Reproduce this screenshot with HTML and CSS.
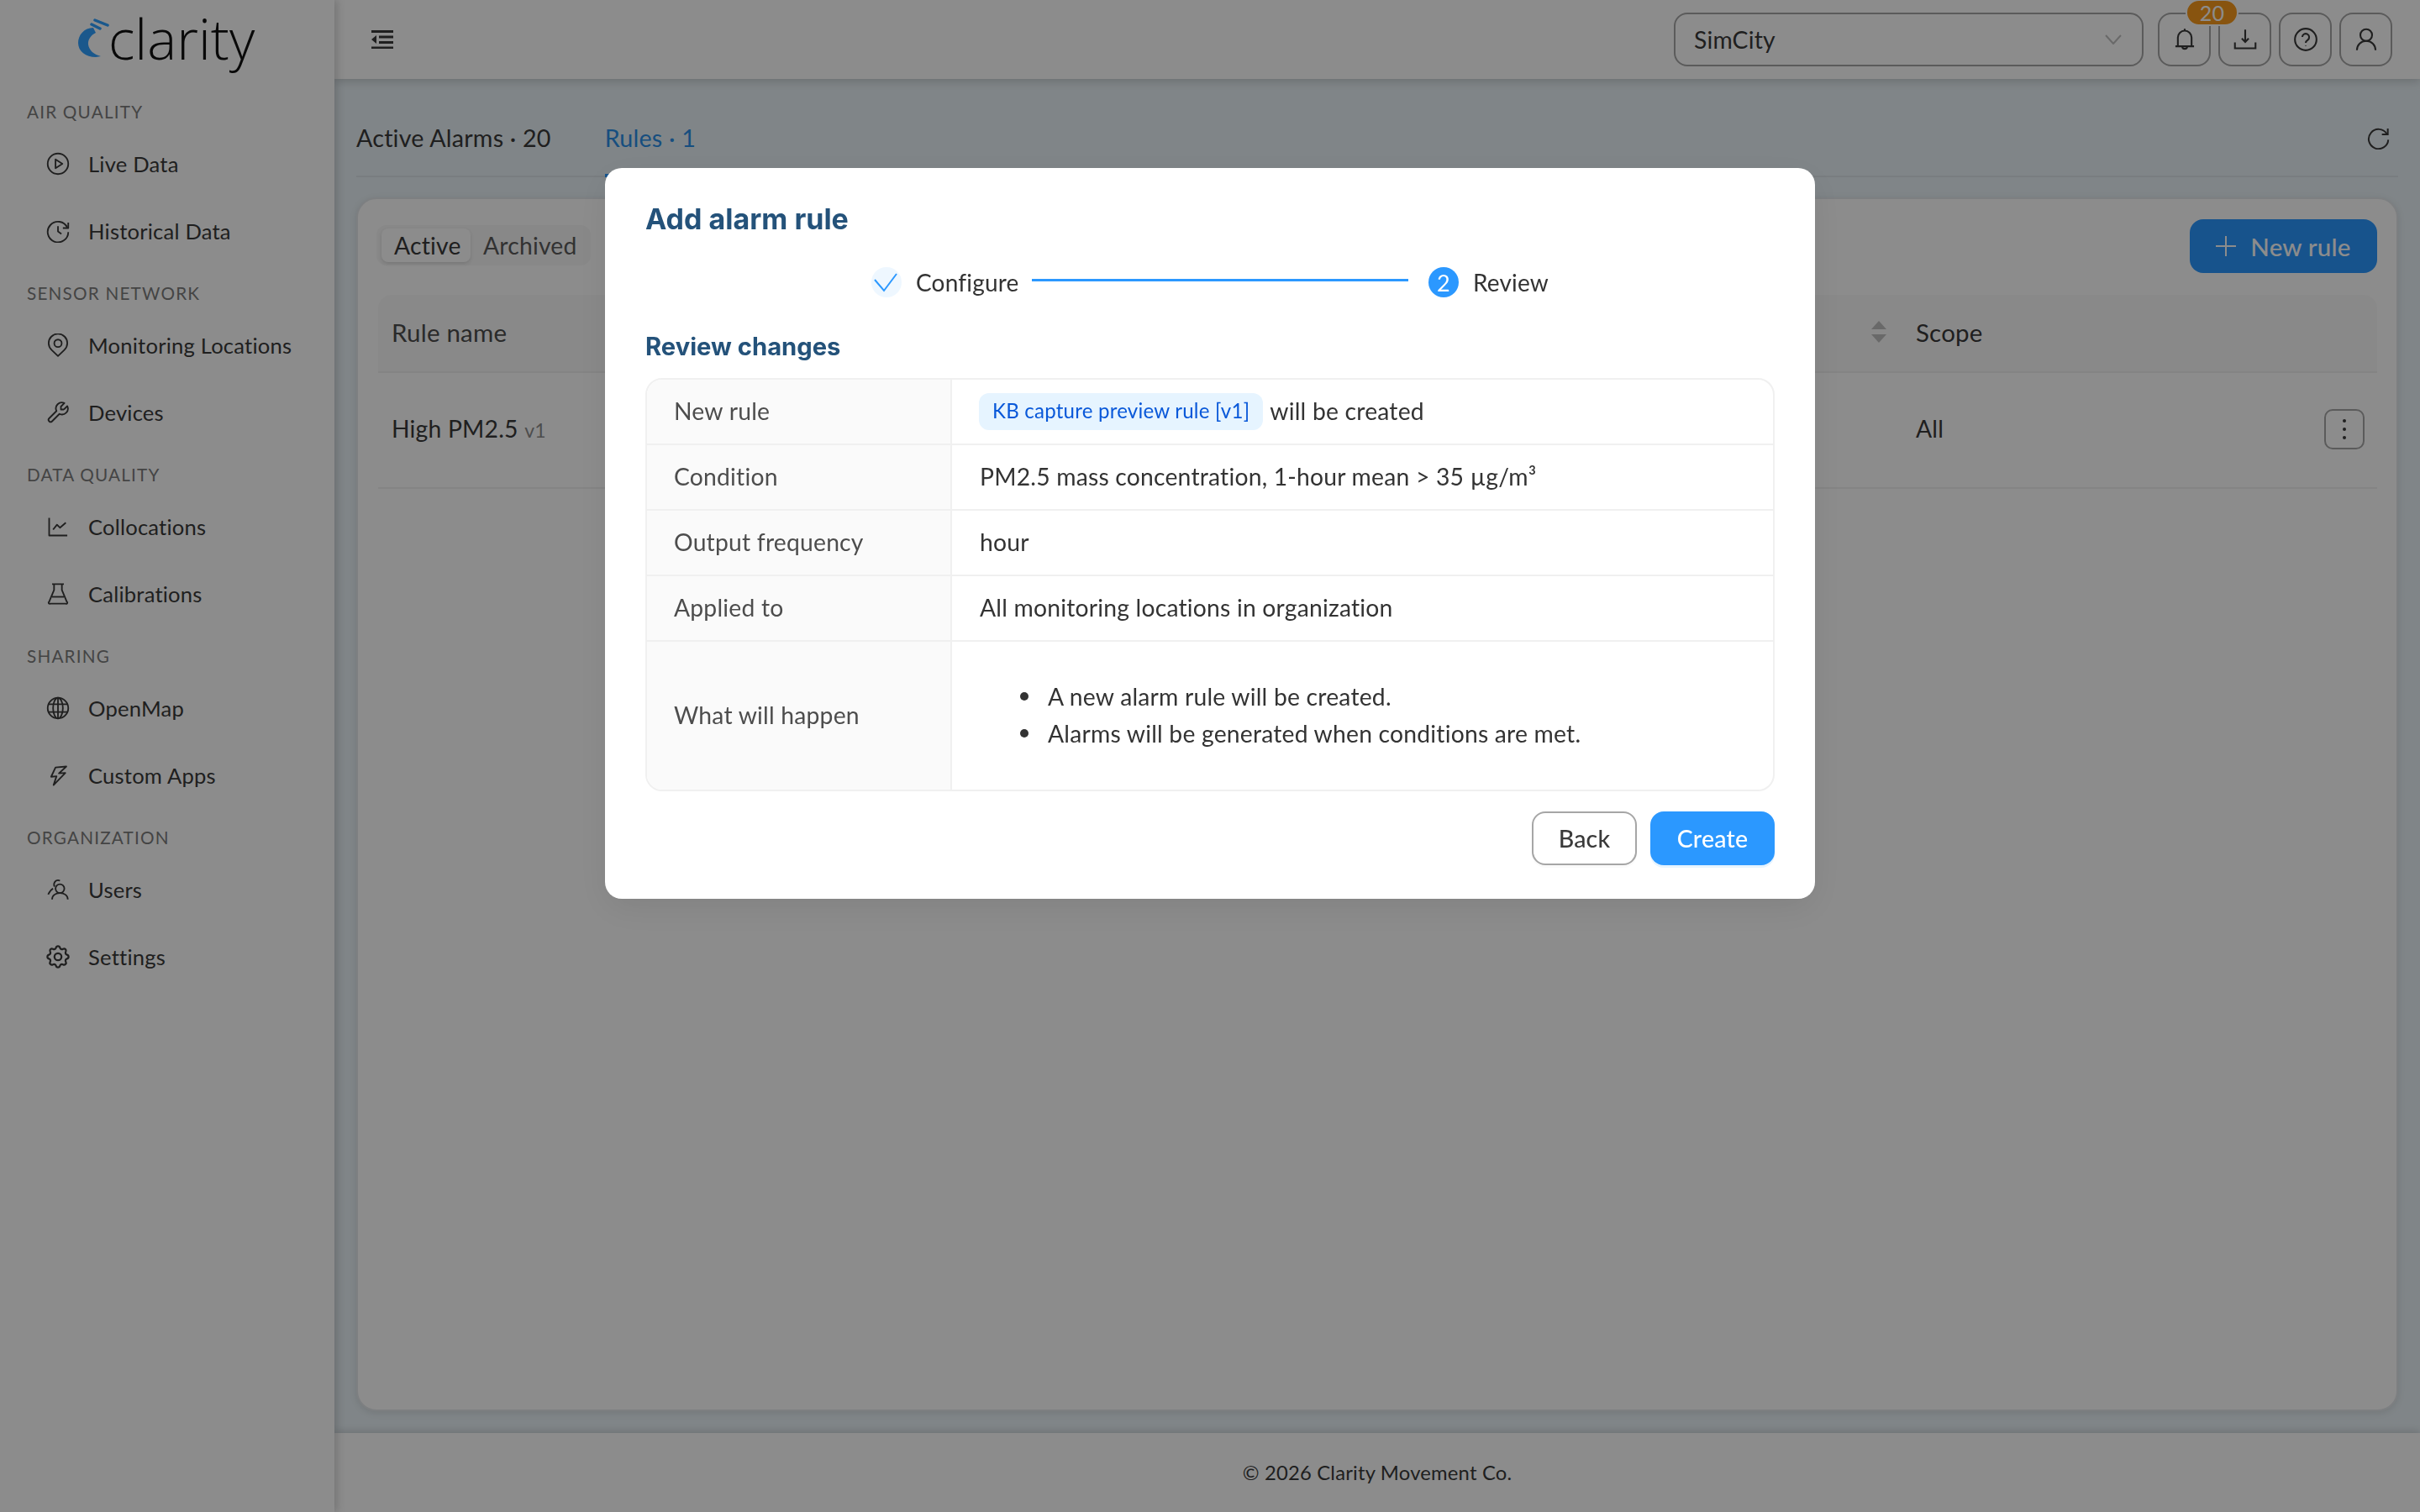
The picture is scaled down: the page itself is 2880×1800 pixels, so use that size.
FILE: index.html
```html
<!DOCTYPE html>
<html>
<head>
    <title>Alarm rules</title>
    <link rel="stylesheet" href="styles.css">
</head>

<body>
    <aside class="sidebar">
        <div class="logo">
            <svg class="logo-mark" viewBox="0 0 40 54">
                <path class="mark-fill" d="M21 13C10 13 3 22 3 31c0 10 9 17 21 17l6-1c-8-2-14-7-15-14-.5-6 3-11 9-14z"/>
                <path class="mark-line" d="M19 9l10 5M23 4l15 6"/>
            </svg>
            <span class="logo-text">clarity</span>
        </div>

        <div class="nav-label">Air Quality</div>
        <a class="nav-item">
            <svg class="nav-icon" viewBox="0 0 24 24"><circle cx="12" cy="12" r="10.5"/><path d="M9.5 7.500l7 4.500-7 4.500z"/></svg>
            Live Data
        </a>
        <a class="nav-item">
            <svg class="nav-icon" viewBox="0 0 24 24"><path d="M21.500 8.500A10.500 10.500 0 1 0 22.500 13"/><path d="M22.500 3.500v5.500h-5.500"/><path d="M12 7v5.500l3.500 2.500"/></svg>
            Historical Data
        </a>

        <div class="nav-label">Sensor Network</div>
        <a class="nav-item">
            <svg class="nav-icon" viewBox="0 0 24 24"><path d="M12 23l-6.500-6.200a9.500 9.500 0 1 1 13 0z"/><circle cx="12" cy="10" r="3.800"/></svg>
            Monitoring Locations
        </a>
        <a class="nav-item">
            <svg class="nav-icon" viewBox="0 0 24 24"><path d="M18 9h-3V6l3.500-3.500a6 6 0 0 0-8 8L3 18a2 2 0 0 0 3 3l7.500-7.500a6 6 0 0 0 8-8L18 9"/></svg>
            Devices
        </a>

        <div class="nav-label">Data Quality</div>
        <a class="nav-item">
            <svg class="nav-icon" viewBox="0 0 24 24"><path d="M3 3v18h18.500"/><path d="M7 15l4-5 3 3 6-5"/></svg>
            Collocations
        </a>
        <a class="nav-item">
            <svg class="nav-icon" viewBox="0 0 24 24"><path d="M6 2h12M8 2v6L3 20a1 1 0 0 0 1 2h16a1 1 0 0 0 1-2L16 8V2"/><path d="M6 15h12"/></svg>
            Calibrations
        </a>

        <div class="nav-label">Sharing</div>
        <a class="nav-item">
            <svg class="nav-icon" viewBox="0 0 24 24"><circle cx="12" cy="12" r="10.500"/><ellipse cx="12" cy="12" rx="5" ry="10.500"/><path d="M12 1.500v21M2.500 8h19M2.500 16h19"/></svg>
            OpenMap
        </a>
        <a class="nav-item">
            <svg class="nav-icon" viewBox="0 0 24 24"><path d="M20.500 3L9.500 4 5 13.500l5.500-.5-3 9 12-12.500-6.500.5z"/></svg>
            Custom Apps
        </a>

        <div class="nav-label">Organization</div>
        <a class="nav-item">
            <svg class="nav-icon" viewBox="0 0 24 24"><circle cx="14" cy="11" r="4.500"/><path d="M6 22c0-4 3.500-6.500 8-6.500s8 2.500 8 6.500"/><path d="M8.500 9A5 5 0 0 1 10 3c1-.5 3-.5 4 0M7 11c-2 1-4 4-5 6"/></svg>
            Users
        </a>
        <a class="nav-item">
            <svg class="nav-icon" viewBox="2 2 20 20"><path d="M10.325 4.317c.426-1.756 2.924-1.756 3.350 0a1.724 1.724 0 0 0 2.573 1.066c1.543-.94 3.310.826 2.370 2.370a1.724 1.724 0 0 0 1.065 2.572c1.756.426 1.756 2.924 0 3.350a1.724 1.724 0 0 0-1.066 2.573c.94 1.543-.826 3.310-2.370 2.370a1.724 1.724 0 0 0-2.572 1.065c-.426 1.756-2.924 1.756-3.350 0a1.724 1.724 0 0 0-2.573-1.066c-1.543.94-3.310-.826-2.370-2.370a1.724 1.724 0 0 0-1.065-2.572c-1.756-.426-1.756-2.924 0-3.350a1.724 1.724 0 0 0 1.066-2.573c-.94-1.543.826-3.310 2.370-2.370 1 .608 2.296.07 2.572-1.065z"/><circle cx="12" cy="12" r="3"/></svg>
            Settings
        </a>
    </aside>

    <div class="main">
        <header class="topbar">
            <svg class="menu-icon" viewBox="0 0 26 22"><path d="M0 1.500h26M9 8h17M9 14.500h17M0 21h26"/><path class="solid" d="M6 6v10l-6-5z"/></svg>
            <div class="select">
                <span>SimCity</span>
                <svg class="chevron" viewBox="0 0 20 12"><path d="M1 1l9 10 9-10"/></svg>
            </div>
            <div class="top-btn">
                <svg viewBox="0 0 24 24"><path d="M12 1v2M5 19V10a7 7 0 0 1 14 0v9M2.500 19h19M9.500 19a2.500 2.500 0 0 0 5 0"/></svg>
                <span class="badge">20</span>
            </div>
            <div class="top-btn">
                <svg viewBox="0 0 24 24"><path d="M12 2v12M8.500 11l3.500 3.500 3.500-3.500"/><path d="M1.500 15v6h21v-6"/></svg>
            </div>
            <div class="top-btn">
                <svg viewBox="0 0 24 24"><circle cx="12" cy="12" r="11"/><path d="M8.500 9.500a3.500 3.500 0 1 1 5.500 3c-1.200.8-2 1.500-2 3"/><path d="M12 18v.5"/></svg>
            </div>
            <div class="top-btn">
                <svg viewBox="0 0 24 24"><circle cx="12" cy="7.500" r="6"/><path d="M2.500 23c0-5.500 4-9.500 9.500-9.500s9.500 4 9.500 9.500"/></svg>
            </div>
        </header>

        <div class="content">
            <div class="tabs">
                <span class="tab">Active Alarms · 20</span>
                <span class="tab tab-active">Rules · 1</span>
                <svg class="refresh" viewBox="0 0 24 24"><path d="M21 8a10 10 0 1 0 1.500 6"/><path d="M22 2.500V8.500h-6"/></svg>
            </div>

            <div class="card">
                <div class="card-top">
                    <div class="segment">
                        <span class="segment-item segment-on">Active</span>
                        <span class="segment-item">Archived</span>
                    </div>
                    <button class="new-btn">
                        <svg class="plus" viewBox="0 0 24 24"><path d="M12 0v24M0 12h24"/></svg>
                        New rule
                    </button>
                </div>
                <div class="table-head">
                    <span class="col-name">Rule name</span>
                    <span class="sorter"></span>
                    <span class="col-scope">Scope</span>
                </div>
                <div class="table-row">
                    <span class="col-name">High PM2.5 <small>v1</small></span>
                    <span class="col-scope">All</span>
                    <span class="kebab"><i></i><i></i><i></i></span>
                </div>
            </div>
        </div>

        <footer class="footer">© 2026 Clarity Movement Co.</footer>
    </div>

    <div class="mask">
        <div class="modal">
            <h2 class="modal-title">Add alarm rule</h2>

            <div class="steps">
                <span class="step-done">
                    <svg viewBox="0 0 36 36"><path d="M4 15l11 13L30 8"/></svg>
                </span>
                <span class="step-text">Configure</span>
                <span class="step-line"></span>
                <span class="step-num">2</span>
                <span class="step-text">Review</span>
            </div>

            <h3 class="modal-sub">Review changes</h3>

            <div class="review">
                <div class="review-row">
                    <div class="review-label">New rule</div>
                    <div class="review-value"><span class="tag">KB capture preview rule [v1]</span> will be created</div>
                </div>
                <div class="review-row">
                    <div class="review-label">Condition</div>
                    <div class="review-value">PM2.5 mass concentration, 1-hour mean &gt; 35 µg/m³</div>
                </div>
                <div class="review-row">
                    <div class="review-label">Output frequency</div>
                    <div class="review-value">hour</div>
                </div>
                <div class="review-row">
                    <div class="review-label">Applied to</div>
                    <div class="review-value">All monitoring locations in organization</div>
                </div>
                <div class="review-row review-last">
                    <div class="review-label">What will happen</div>
                    <div class="review-value">
                        <ul>
                            <li>A new alarm rule will be created.</li>
                            <li>Alarms will be generated when conditions are met.</li>
                        </ul>
                    </div>
                </div>
            </div>

            <div class="modal-actions">
                <button class="btn-back">Back</button>
                <button class="btn-create">Create</button>
            </div>
        </div>
    </div>
</body>
</html>
```

FILE: styles.css
```css
* {
    box-sizing: border-box;
}

body {
    margin: 0;
    width: 2880px;
    height: 1800px;
    overflow: hidden;
    display: flex;
    font-family: "Lato", "Open Sans", sans-serif;
    font-size: 28.3px;
    letter-spacing: 0.2px;
    color: #3a3a3a;
    background-color: #e9f2f7;
}

/* sidebar */
.sidebar {
    width: 398px;
    height: 1800px;
    flex: none;
    font-size: 25.6px;
    background-color: #fff;
    box-shadow: 3px 0 10px rgba(0, 0, 0, .18);
    position: relative;
    z-index: 2;
}

.logo {
    height: 94px;
    display: flex;
    padding: 7px 0 0 90px;
}

.logo-mark {
    width: 40px;
    height: 54px;
    margin-top: 13px;
}

.mark-fill {
    fill: #31a0ff;
}

.mark-line {
    fill: none;
    stroke: #31a0ff;
    stroke-width: 3.5;
    stroke-linecap: round;
}

.logo-text {
    margin-left: -1px;
    font-family: "Open Sans", sans-serif;
    font-weight: 300;
    font-size: 66px;
    line-height: 76px;
    letter-spacing: 0;
    color: #111;
}

.nav-label {
    height: 28px;
    line-height: 28px;
    margin: 25px 0 0 32px;
    font-size: 20.7px;
    letter-spacing: 1.2px;
    text-transform: uppercase;
    color: #7d7d7d;
}

.nav-item {
    height: 80px;
    display: flex;
    align-items: center;
    padding-left: 55px;
    gap: 22px;
}

.nav-label + .nav-item {
    margin-top: 8px;
}

.nav-item + .nav-label {
    margin-top: 20px;
}

.nav-icon {
    width: 28px;
    height: 28px;
    flex: none;
    fill: none;
    stroke: #3a3a3a;
    stroke-width: 1.6;
    stroke-linejoin: round;
}

/* main column */
.main {
    flex: 1;
    display: flex;
    flex-direction: column;
    height: 1800px;
}

.topbar {
    height: 94px;
    flex: none;
    display: flex;
    align-items: center;
    padding: 0 33px 0 44px;
    gap: 9px;
    background-color: #fff;
    box-shadow: 0 3px 10px rgba(0, 0, 0, .16);
    position: relative;
}

.menu-icon {
    width: 26px;
    height: 22px;
    margin-right: auto;
    fill: none;
    stroke: #3a3a3a;
    stroke-width: 3;
}

.menu-icon .solid {
    fill: #3a3a3a;
    stroke: none;
}

.select {
    width: 559px;
    height: 64px;
    margin-right: 8px;
    padding: 0 24px 0 22px;
    display: flex;
    align-items: center;
    justify-content: space-between;
    border: 2px solid #a6a6a6;
    border-radius: 16px;
}

.chevron {
    width: 20px;
    height: 12px;
    fill: none;
    stroke: #bfbfbf;
    stroke-width: 2;
}

.top-btn {
    width: 63px;
    height: 64px;
    position: relative;
    display: flex;
    align-items: center;
    justify-content: center;
    border: 2px solid #a6a6a6;
    border-radius: 16px;
}

.top-btn svg {
    width: 28px;
    height: 28px;
    fill: none;
    stroke: #3a3a3a;
    stroke-width: 1.8;
}

.badge {
    position: absolute;
    top: -18px;
    left: 31px;
    width: 63px;
    height: 32px;
    line-height: 28px;
    text-align: center;
    font-size: 25px;
    color: #fff;
    background-color: #f79a1d;
    border: 2px solid #fff;
    border-radius: 16px;
    z-index: 1;
}

.content {
    flex: 1;
    padding: 44px 26px 26px 26px;
    display: flex;
    flex-direction: column;
}

.tabs {
    height: 73px;
    flex: none;
    display: flex;
    align-items: flex-start;
    gap: 64px;
    padding-top: 8px;
    border-bottom: 2px solid #dde4e9;
    position: relative;
}

.tab {
    line-height: 36px;
    font-size: 28.7px;
}

.tab-active {
    color: #2b8fe8;
    position: relative;
    align-self: stretch;
}

.tab-active::after {
    content: "";
    position: absolute;
    left: 0;
    right: 0;
    bottom: -2px;
    height: 4px;
    background-color: #2b98ff;
}

.refresh {
    margin-left: auto;
    margin-right: 10px;
    margin-top: 4px;
    width: 28px;
    height: 28px;
    fill: none;
    stroke: #3a3a3a;
    stroke-width: 1.7;
}

.card {
    flex: 1;
    margin-top: 24px;
    background-color: #fff;
    border: 2px solid #e3e8ec;
    border-radius: 24px;
    box-shadow: 0 2px 8px rgba(0, 0, 0, .1);
    padding: 24px 23px 0 24px;
}

.card-top {
    height: 90px;
    display: flex;
    justify-content: space-between;
    align-items: flex-start;
}

.segment {
    height: 48px;
    margin: 7px 0 0 -2px;
    padding: 4px 0 4px 6px;
    width: 255px;
    display: flex;
    background-color: #f7f7f7;
    border-radius: 12px;
}

.segment-item {
    padding: 0 15px;
    line-height: 40px;
    color: #5c5c5c;
}

.segment-on {
    width: 106px;
    background-color: #fff;
    color: #3a3a3a;
    border-radius: 8px;
    box-shadow: 0 2px 4px rgba(0, 0, 0, .12);
}

.new-btn {
    width: 223px;
    height: 64px;
    border: none;
    border-radius: 16px;
    background-color: #2b98ff;
    color: #fff;
    font-family: inherit;
    font-size: 29.5px;
    font-weight: 500;
    letter-spacing: inherit;
    display: flex;
    align-items: center;
    justify-content: center;
    gap: 17px;
}

.plus {
    width: 24px;
    height: 24px;
    fill: none;
    stroke: #fff;
    stroke-width: 2;
}

.table-head {
    height: 93px;
    display: flex;
    align-items: center;
    padding: 0 0 3px 16px;
    font-size: 29.5px;
    background-color: #fafafa;
    border-bottom: 2px solid #f0f0f0;
    border-radius: 16px 16px 0 0;
    position: relative;
}

.table-row {
    height: 138px;
    display: flex;
    align-items: center;
    padding: 0 0 4px 16px;
    border-bottom: 2px solid #f0f0f0;
    position: relative;
}

.col-name {
    width: 1814px;
}

.col-name small {
    font-size: 23px;
    color: #8c8c8c;
}

.table-head .col-name {
    color: #4d4d4d;
    width: 1760px;
}

.sorter {
    width: 54px;
    height: 26px;
    position: relative;
}

.sorter::before,
.sorter::after {
    content: "";
    position: absolute;
    left: 1px;
    border-left: 9px solid transparent;
    border-right: 9px solid transparent;
}

.sorter::before {
    top: 0;
    border-bottom: 10px solid #bfbfbf;
}

.sorter::after {
    bottom: 0;
    border-top: 10px solid #bfbfbf;
}

.kebab {
    position: absolute;
    right: 15px;
    top: 43px;
    width: 48px;
    height: 48px;
    border: 2px solid #a6a6a6;
    border-radius: 10px;
    display: flex;
    flex-direction: column;
    align-items: center;
    justify-content: center;
    gap: 6px;
}

.kebab i {
    width: 4px;
    height: 4px;
    border-radius: 50%;
    background-color: #3a3a3a;
}

.footer {
    height: 94px;
    flex: none;
    display: flex;
    align-items: center;
    justify-content: center;
    font-size: 23.8px;
    background-color: #fff;
    box-shadow: 0 -3px 8px rgba(0, 0, 0, .12);
}

/* modal */
.mask {
    position: fixed;
    inset: 0;
    z-index: 10;
    background-color: rgba(0, 0, 0, .45);
    display: flex;
    justify-content: center;
    align-items: flex-start;
    padding-top: 200px;
}

.modal {
    width: 1440px;
    height: 870px;
    padding: 39px 48px 0;
    background-color: #fff;
    border-radius: 20px;
    box-shadow: 0 12px 40px rgba(0, 0, 0, .08);
    color: #333;
}

.modal-title,
.modal-sub {
    margin: 0;
    font-family: "Inter", sans-serif;
    font-weight: 700;
    color: #24527a;
    letter-spacing: 0;
}

.modal-title {
    font-size: 34px;
    line-height: 44px;
}

.modal-sub {
    font-size: 29.2px;
    line-height: 40px;
    margin-top: 39px;
}

.steps {
    width: 806px;
    height: 36px;
    margin: 35px auto 0;
    display: flex;
    align-items: center;
}

.step-done,
.step-num {
    width: 36px;
    height: 36px;
    flex: none;
    border-radius: 50%;
    display: flex;
    align-items: center;
    justify-content: center;
}

.step-done {
    background-color: #eef7ff;
}

.step-done svg {
    width: 36px;
    height: 36px;
    fill: none;
    stroke: #2b98ff;
    stroke-width: 2;
}

.step-num {
    margin-left: 24px;
    background-color: #2b98ff;
    color: #fff;
    font-size: 27px;
}

.step-text {
    margin-left: 17px;
    font-size: 28px;
}

.step-line {
    flex: 1;
    height: 3px;
    margin: -5px 0 0 15px;
    background-color: #2b98ff;
}

.review {
    margin-top: 17px;
    border: 2px solid #f0f0f0;
    border-radius: 20px;
    overflow: hidden;
}

.review-row {
    display: flex;
    height: 78px;
    border-bottom: 2px solid #f0f0f0;
}

.review-last {
    height: 176px;
    border-bottom: none;
}

.review-label {
    width: 363px;
    flex: none;
    display: flex;
    align-items: center;
    padding: 0 0 2px 32px;
    background-color: #fafafa;
    border-right: 2px solid #f0f0f0;
    color: #4d4d4d;
}

.review-value {
    flex: 1;
    display: flex;
    align-items: center;
    padding: 0 0 2px 33px;
    gap: 8px;
}

.tag {
    height: 44px;
    line-height: 42px;
    margin: 2px 0 0 -1px;
    padding: 0 16px;
    background-color: #e6f4ff;
    color: #0958d9;
    border-radius: 12px;
    font-size: 24.1px;
}

.review-value ul {
    margin: 0;
    padding-left: 81px;
    list-style: none;
}

.review-value li {
    position: relative;
    line-height: 44px;
}

.review-value li::before {
    content: "";
    position: absolute;
    left: -33px;
    top: 17px;
    width: 10px;
    height: 10px;
    border-radius: 50%;
    background-color: #333;
}

.modal-actions {
    margin-top: 24px;
    display: flex;
    justify-content: flex-end;
    gap: 16px;
}

.modal-actions button {
    height: 64px;
    border-radius: 16px;
    font-family: inherit;
    font-size: 28.5px;
    font-weight: 500;
    letter-spacing: inherit;
}

.btn-back {
    width: 125px;
    background-color: #fff;
    border: 2px solid #a6a6a6;
    color: #3a3a3a;
    box-shadow: 0 3px 0 rgba(0, 0, 0, .02);
}

.btn-create {
    width: 148px;
    background-color: #2b98ff;
    border: none;
    color: #fff;
    box-shadow: 0 3px 0 rgba(5, 145, 255, .1);
}
```
